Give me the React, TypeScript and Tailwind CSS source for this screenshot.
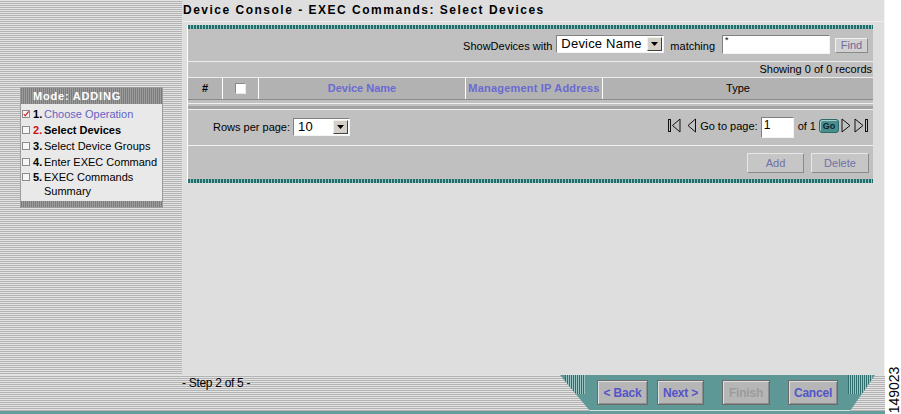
import type { ReactNode } from 'react'

const stripes =
  'bg-[repeating-linear-gradient(to_bottom,#e3e3e3_0px,#e3e3e3_1px,#b3b3b3_1px,#b3b3b3_2px)]'
const darkBar =
  'bg-[repeating-linear-gradient(to_right,#7c7c7c_0px,#7c7c7c_1px,#9c9c9c_1px,#9c9c9c_2px)]'
const tealDots =
  'bg-[repeating-linear-gradient(to_right,#226e6c_0px,#226e6c_2px,#8fc0bd_2px,#8fc0bd_3px)]'
const tealStripes =
  'bg-[repeating-linear-gradient(to_right,#2f6e6c_0px,#2f6e6c_1px,#9cc6c4_1px,#9cc6c4_2px)]'

function Box({ checked }: { checked?: boolean }) {
  return (
    <span className="mt-[4px] ml-[1px] flex h-[8px] w-[8px] shrink-0 items-center justify-center border border-[#8c8c8c] bg-[#f6f6f6]">
      {checked ? (
        <svg width="8" height="8" viewBox="0 0 8 8" className="-mt-[1px]">
          <path d="M1 4 L3 6.5 L7.5 0.5" fill="none" stroke="#d02020" strokeWidth="1.6" />
        </svg>
      ) : null}
    </span>
  )
}

function Step({
  n,
  checked,
  current,
  done,
  children,
}: {
  n: number
  checked?: boolean
  current?: boolean
  done?: boolean
  children: ReactNode
}) {
  return (
    <li className="flex items-start leading-[16px]">
      <Box checked={checked} />
      <span className={`ml-[3px] w-[11px] shrink-0 font-bold ${current ? 'text-[#cc1111]' : 'text-black'}`}>
        {n}.
      </span>
      <span
        className={
          done ? 'text-[#6464c4]' : current ? 'font-bold text-black' : 'text-black'
        }
      >
        {children}
      </span>
    </li>
  )
}

function Wizard() {
  return (
    <div className="w-[143px] border border-[#9c9c9c] bg-[#e9e9e9]">
      <div
        className={`h-[16px] pl-[12px] text-[11px] leading-[16px] font-bold tracking-[0.8px] text-white ${darkBar}`}
      >
        Mode: ADDING
      </div>
      <ul className="pt-[2px] pb-[3px] pr-[4px]">
        <Step n={1} checked done>
          Choose Operation
        </Step>
        <Step n={2} current>
          Select Devices
        </Step>
        <Step n={3}>Select Device Groups</Step>
        <Step n={4}>Enter EXEC Command</Step>
        <li className="flex items-start leading-[14px]">
          <span className="-mt-[1px] flex">
            <Box />
          </span>
          <span className="ml-[3px] w-[11px] shrink-0 font-bold">5.</span>
          <span>EXEC Commands Summary</span>
        </li>
      </ul>
      <div className={`h-[6px] ${darkBar}`} />
    </div>
  )
}

function Select({ value, width }: { value: string; width: string }) {
  return (
    <div
      className={`flex h-[18px] items-center border border-t-[#808080] border-l-[#808080] border-r-[#f4f4f4] border-b-[#f4f4f4] bg-white ${width}`}
    >
      <span className="flex-1 pl-[4px] text-[13px] leading-[16px] tracking-[0.2px]">{value}</span>
      <span className="mr-[1px] flex h-[14px] w-[15px] items-center justify-center border border-t-[#f0f0f0] border-l-[#f0f0f0] border-r-[#404040] border-b-[#404040] bg-[#d4d0c8]">
        <svg width="7" height="4" viewBox="0 0 7 4">
          <path d="M0 0 H7 L3.5 4 Z" fill="#000" />
        </svg>
      </span>
    </div>
  )
}

function FirstIcon() {
  return (
    <svg width="13" height="15" viewBox="0 0 13 15">
      <rect x="0.5" y="1.5" width="2" height="12" fill="none" stroke="#111" />
      <path d="M12 1 L4.5 7.5 L12 14 Z" fill="none" stroke="#111" />
    </svg>
  )
}

function PrevIcon() {
  return (
    <svg width="9" height="15" viewBox="0 0 9 15">
      <path d="M8.5 1 L1 7.5 L8.5 14 Z" fill="none" stroke="#111" />
    </svg>
  )
}

function NextIcon() {
  return (
    <svg width="10" height="15" viewBox="0 0 10 15">
      <path d="M1 1 L9 7.5 L1 14 Z" fill="none" stroke="#111" />
    </svg>
  )
}

function LastIcon() {
  return (
    <svg width="15" height="15" viewBox="0 0 15 15">
      <path d="M1 1 L9 7.5 L1 14 Z" fill="none" stroke="#111" />
      <rect x="11.5" y="1.5" width="2" height="12" fill="none" stroke="#111" />
    </svg>
  )
}

function PanelButton({ label, width }: { label: string; width: string }) {
  return (
    <div
      className={`flex h-[20px] items-center justify-center border border-t-[#e8e8e8] border-l-[#e8e8e8] border-r-[#8a8a8a] border-b-[#8a8a8a] bg-[#c6c6c6] text-[11px] text-[#7070a4] ${width}`}
    >
      {label}
    </div>
  )
}

function WizardButton({
  label,
  width,
  margin,
  disabled,
}: {
  label: string
  width: string
  margin: string
  disabled?: boolean
}) {
  return (
    <div
      className={`mt-[5px] flex h-[25px] items-center justify-center border border-[#6a6a6a] bg-[#b6b6b6] text-[12px] font-bold tracking-[-0.2px] shadow-[inset_1px_1px_0_#dedede,inset_-1px_-1px_0_#8e8e8e] ${
        disabled ? 'text-[#9c9c9c]' : 'text-[#5454c8]'
      } ${width} ${margin}`}
    >
      {label}
    </div>
  )
}

function DevicePanel() {
  return (
    <div className="mt-[3px] ml-[5px] w-[686px] border-l border-white bg-[#c0c0c0]">
      <div className={`h-[4px] ${tealDots}`} />

      <div className="flex h-[32px] items-start justify-end pt-[6px] pr-[5px]">
        <span className="mt-[5px] leading-[13px]">ShowDevices with</span>
        <div className="ml-[4px]">
          <Select value="Device Name" width="w-[108px]" />
        </div>
        <span className="mt-[5px] ml-[6px] leading-[13px]">matching</span>
        <div className="ml-[7px] h-[19px] w-[108px] border border-t-[#808080] border-l-[#808080] border-r-[#f4f4f4] border-b-[#f4f4f4] bg-white pl-[2px] text-[9px] leading-[9px]">
          *
        </div>
        <div className="mt-[3px] ml-[5px] flex h-[15px] w-[33px] items-center justify-center border border-t-[#f0f0f0] border-l-[#f0f0f0] border-r-[#8a8a8a] border-b-[#8a8a8a] bg-[#d0d0d0] text-[11px] text-[#6c6c9c]">
          Find
        </div>
      </div>

      <div className="h-px bg-[#ececec]" />
      <div className="flex h-[15px] items-center justify-end pr-[1px] leading-[15px]">
        Showing 0 of 0 records
      </div>
      <div className="h-px bg-[#ececec]" />

      <div className="flex h-[21px] items-center bg-[#b2b2b2] text-[11px]">
        <div className="flex h-full w-[35px] items-center justify-center border-r border-white font-bold">
          #
        </div>
        <div className="flex h-full w-[36px] items-center justify-center border-r border-white">
          <span className="h-[11px] w-[11px] border border-t-[#8a8a8a] border-l-[#8a8a8a] border-r-[#eaeaea] border-b-[#eaeaea] bg-white" />
        </div>
        <div className="flex h-full w-[207px] items-center justify-center border-r border-white font-bold text-[#6a6ad2]">
          Device Name
        </div>
        <div className="flex h-full w-[137px] items-center justify-center border-r border-white font-bold tracking-[0.2px] text-[#6a6ad2]">
          Management IP Address
        </div>
        <div className="flex h-full flex-1 items-center justify-center">Type</div>
      </div>
      <div className="h-px bg-[#8a8a8a]" />
      <div className="h-[3px]" />
      <div className="h-px bg-[#f0f0f0]" />
      <div className="h-[2px]" />
      <div className="h-[3px] bg-[#a2a2a2]" />
      <div className="h-px bg-[#f0f0f0]" />

      <div className="flex h-[35px] items-start pt-[8px] pr-[4px]">
        <span className="mt-[3px] ml-[25px] leading-[13px]">Rows per page:</span>
        <div className="ml-[3px]">
          <Select value="10" width="w-[57px]" />
        </div>
        <div className="flex-1" />
        <FirstIcon />
        <span className="ml-[6px]">
          <PrevIcon />
        </span>
        <span className="mt-[2px] ml-[4px] leading-[13px]">Go to page:</span>
        <div className="-mt-[1px] ml-[3px] h-[21px] w-[33px] border border-t-[#808080] border-l-[#808080] border-r-[#f4f4f4] border-b-[#f4f4f4] bg-white pl-[2px] text-[12px] leading-[14px]">
          1
        </div>
        <span className="mt-[2px] ml-[4px] leading-[13px]">of 1</span>
        <div className="mt-[1px] ml-[3px] flex h-[14px] w-[20px] items-center justify-center rounded-[3px] border border-[#2e6a68] bg-[#4a8e8c] text-[9px] leading-[9px] font-bold text-[#0c2436] shadow-[inset_1px_1px_0_#a8d0ce]">
          Go
        </div>
        <span className="ml-[2px]">
          <NextIcon />
        </span>
        <span className="ml-[3px]">
          <LastIcon />
        </span>
      </div>

      <div className="h-px bg-[#f0f0f0]" />
      <div className="flex h-[33px] items-start justify-end gap-[7px] pt-[7px] pr-[4px]">
        <PanelButton label="Add" width="w-[57px]" />
        <PanelButton label="Delete" width="w-[58px]" />
      </div>
      <div className={`h-[4px] ${tealDots}`} />
    </div>
  )
}

export default function App() {
  return (
    <div className="flex h-[414px] w-[901px] overflow-hidden bg-white font-['Liberation_Sans',Arial,sans-serif] text-[11px] text-black">
      <div className="flex w-[885px] flex-col">
        <div className="flex h-[375px]">
          <aside className={`w-[182px] shrink-0 pt-[87px] pl-[20px] ${stripes}`}>
            <Wizard />
          </aside>
          <main className="flex-1 border-r border-[#f2f2f2] bg-[#dedede]">
            <div className="h-[22px] border-b border-[#f3eaea] pl-[1px] text-[12px] leading-[21px] font-bold tracking-[1.5px]">
              Device Console - EXEC Commands: Select Devices
            </div>
            <DevicePanel />
          </main>
        </div>

        <footer className={`flex h-[36px] ${stripes}`}>
          <div className="w-[560px] shrink-0 pl-[182px] pt-[1px] text-[12px] leading-[14px] tracking-[-0.3px]">
            - Step 2 of 5 -
          </div>
          <div className="flex h-[36px] w-[315px] items-start bg-[linear-gradient(to_bottom,#5e9896_35px,#cfe3e1_35px)] [clip-path:polygon(0_0,100%_0,calc(100%_-_25px)_100%,30px_100%)]">
            <div className={`ml-[5px] h-[19px] w-[20px] ${tealStripes}`} />
            <WizardButton label="< Back" width="w-[51px]" margin="ml-[12px]" />
            <WizardButton label="Next >" width="w-[47px]" margin="ml-[9px]" />
            <WizardButton label="Finish" width="w-[48px]" margin="ml-[18px]" disabled />
            <WizardButton label="Cancel" width="w-[50px]" margin="ml-[18px]" />
            <div className={`ml-[10px] h-[19px] w-[24px] ${tealStripes}`} />
          </div>
        </footer>
        <div className="h-[3px] bg-[#669c9a]" />
      </div>

      <div className="relative flex-1">
        <span className="absolute top-[383px] left-[-16px] w-[50px] -rotate-90 text-center text-[14px] leading-[14px]">
          149023
        </span>
      </div>
    </div>
  )
}
